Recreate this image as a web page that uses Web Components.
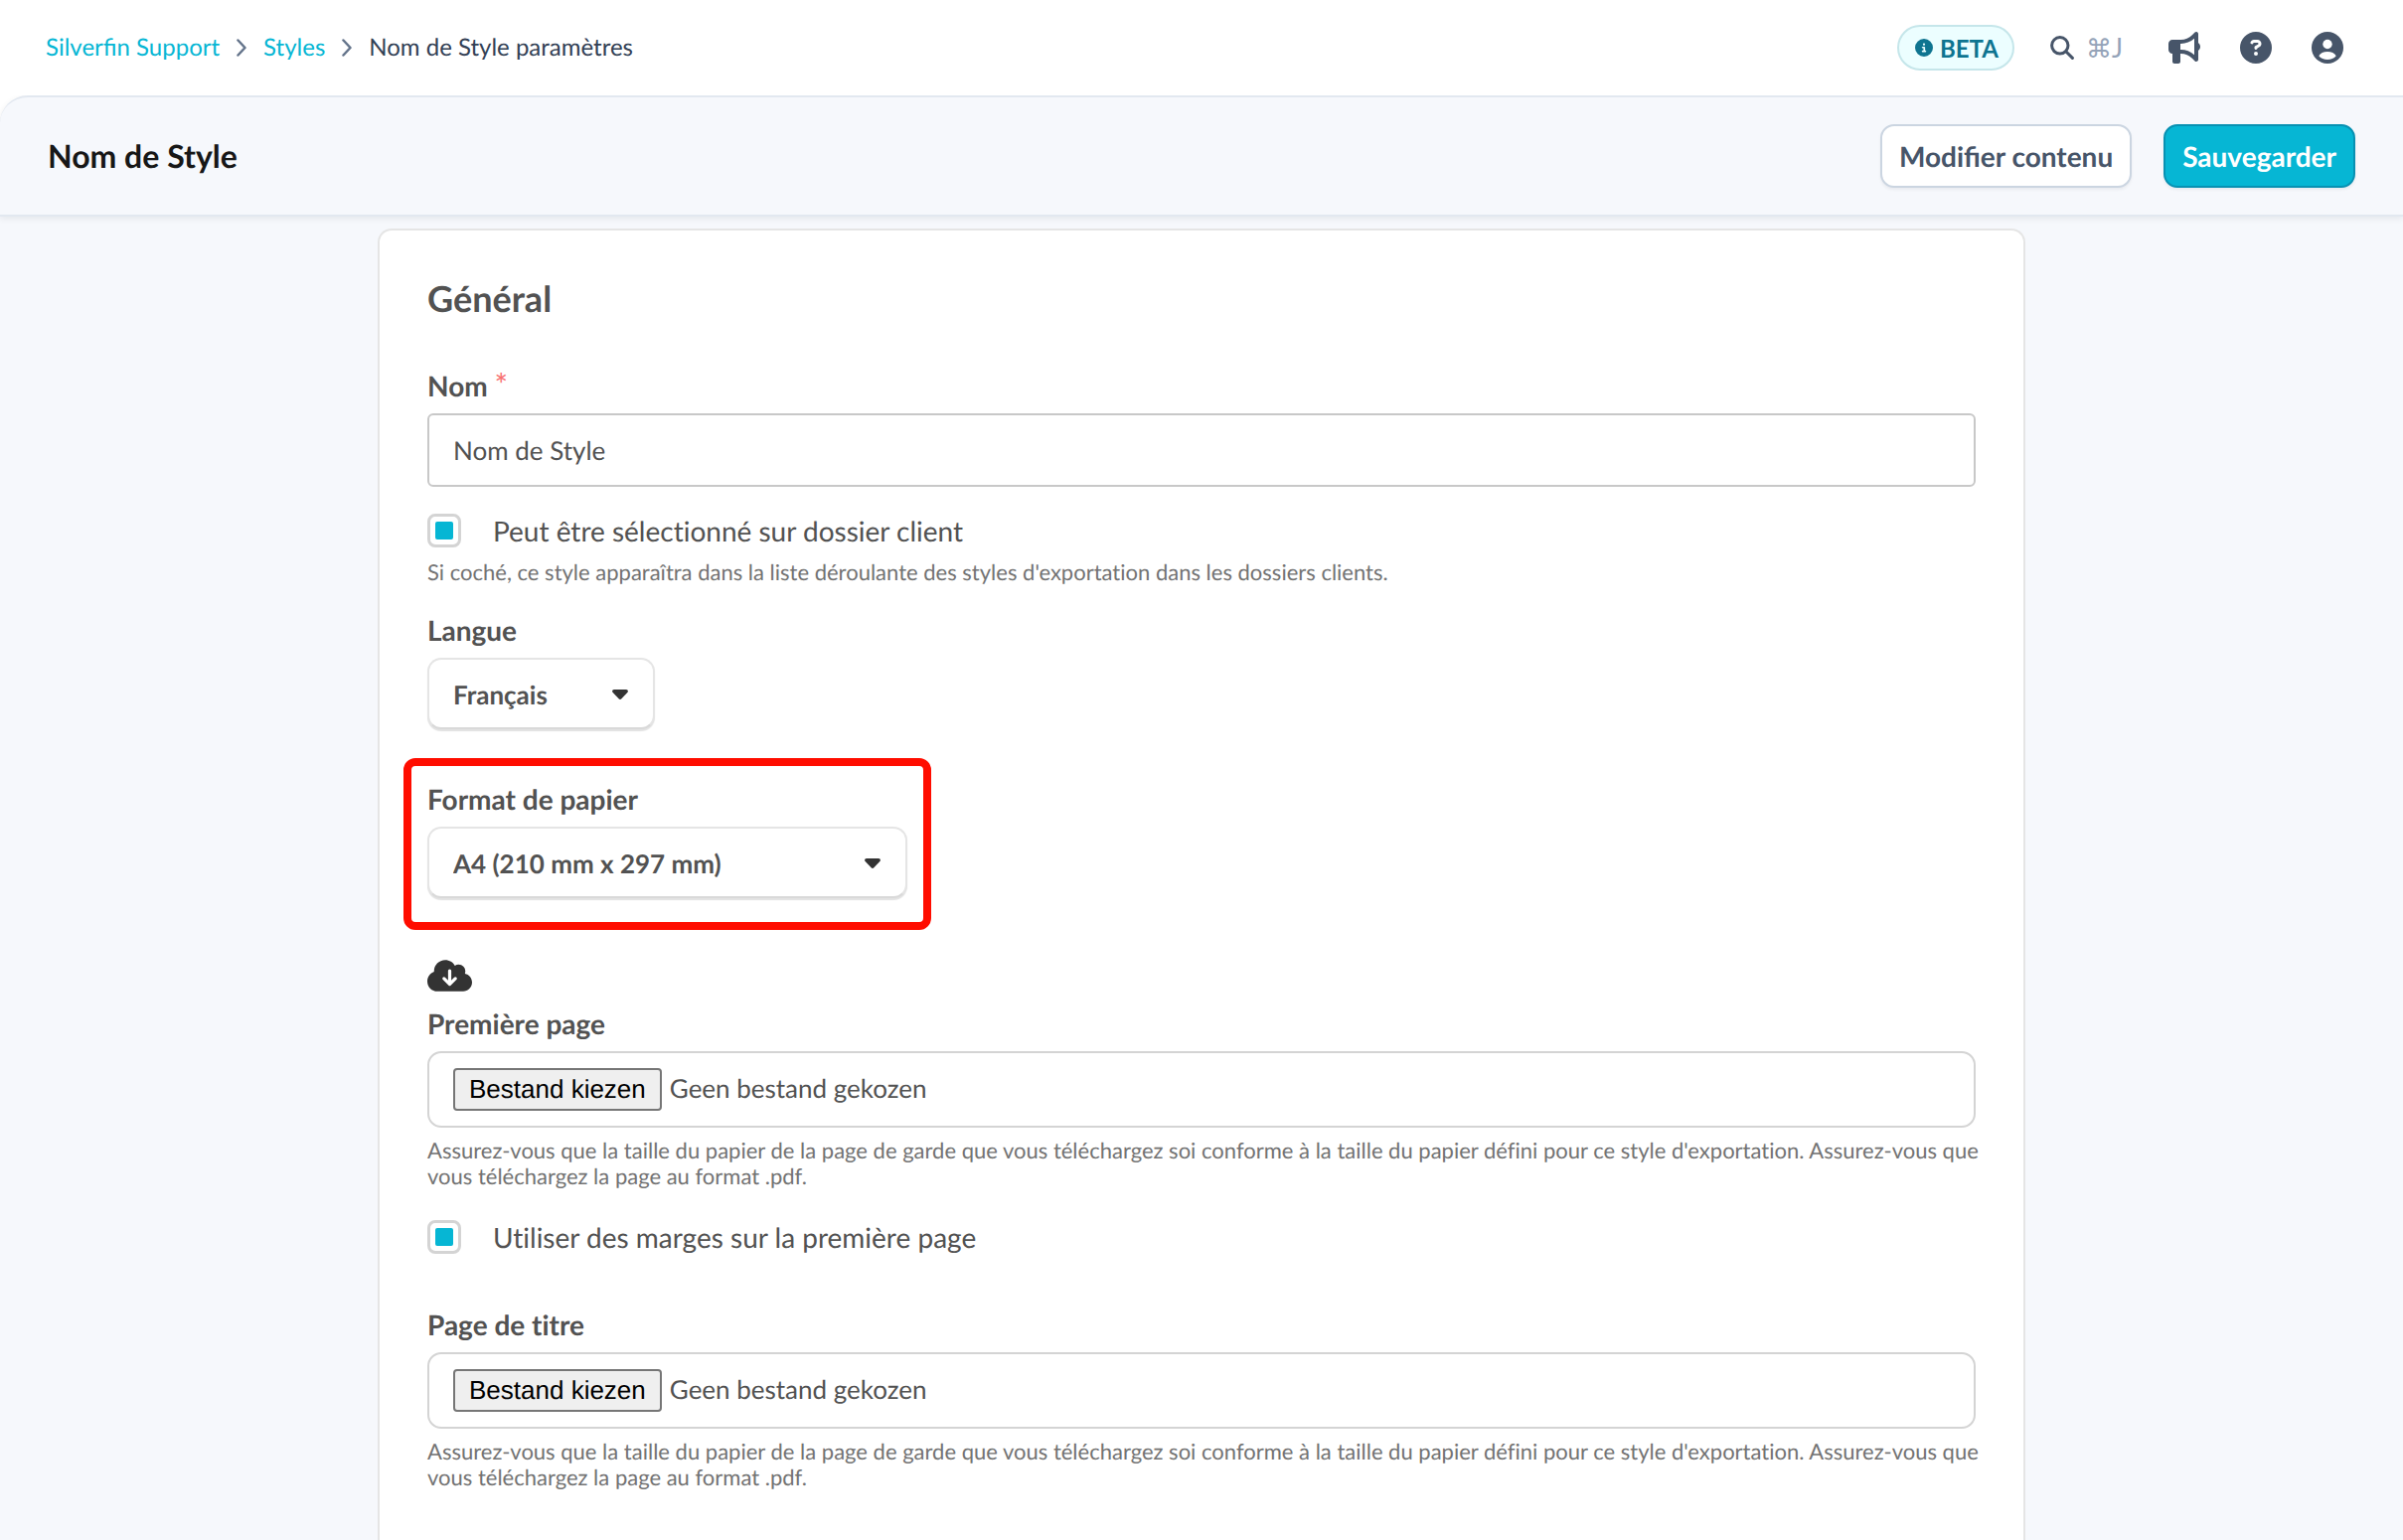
<!DOCTYPE html>
<html lang="fr">
<head>
<meta charset="utf-8">
<meta name="viewport" content="width=device-width, initial-scale=1">
<title>Nom de Style paramètres</title>
<style>
  html, body {
    margin: 0;
    min-height: 100%;
  }
  body {
    --ink: #171717;
    --text: #525252;
    --muted: #737373;
    --slate: #475569;
    --accent: #06b6d4;
    --line: #e2e8f0;
    --control-line: #d4d4d4;
    --page: #f6f8fc;
    --gap: 27px;
    display: flex;
    flex-direction: column;
    min-height: 100vh;
    background: white;
    color: var(--text);
    font-family: Lato, "Liberation Sans", sans-serif;
    font-size: 26px;
    text-rendering: geometricPrecision;
  }
  main {
    flex: 1;
    display: flex;
    flex-direction: column;
    background: var(--page);
    padding: 12px 48px 0;
  }
</style>
</head>
<body>

<top-bar>
  <bread-crumbs>
    <a href="#support">Silverfin Support</a>
    <a href="#styles">Styles</a>
    <span>Nom de Style paramètres</span>
  </bread-crumbs>
</top-bar>

<title-bar>
  Nom de Style
  <action-button slot="actions">Modifier contenu</action-button>
  <action-button slot="actions" primary>Sauvegarder</action-button>
</title-bar>

<main>
  <settings-card>
    <span slot="heading">Général</span>
    <text-field label="Nom" value="Nom de Style" required></text-field>
    <check-field label="Peut être sélectionné sur dossier client">Si coché, ce style apparaîtra dans la liste déroulante des styles d'exportation dans les dossiers clients.</check-field>
    <select-field label="Langue" options="Français|Nederlands|English"></select-field>
    <high-light>
      <select-field wide label="Format de papier" options="A4 (210 mm x 297 mm)|A3 (297 mm x 420 mm)"></select-field>
    </high-light>
    <file-field download label="Première page">Assurez-vous que la taille du papier de la page de garde que vous téléchargez soi conforme à la taille du papier défini pour ce style d'exportation. Assurez-vous que vous téléchargez la page au format .pdf.</file-field>
    <check-field spaced label="Utiliser des marges sur la première page"></check-field>
    <file-field label="Page de titre">Assurez-vous que la taille du papier de la page de garde que vous téléchargez soi conforme à la taille du papier défini pour ce style d'exportation. Assurez-vous que vous téléchargez la page au format .pdf.</file-field>
  </settings-card>
</main>

<script>
const icons = {
  info: ['0 0 512 512', '<path fill-rule="evenodd" d="M256 512A256 256 0 1 0 256 0a256 256 0 1 0 0 512zM216 336h24V272H216c-13.3 0-24-10.7-24-24s10.7-24 24-24h48c13.3 0 24 10.7 24 24v88h8c13.3 0 24 10.7 24 24s-10.7 24-24 24H216c-13.3 0-24-10.7-24-24s10.7-24 24-24zm40-208a32 32 0 1 1 0 64 32 32 0 1 1 0-64z"/>'],
  search: ['0 0 24 24', '<g fill="none" stroke="currentColor" stroke-width="3" stroke-linecap="round"><circle cx="9.8" cy="9.8" r="8.2"/><path d="M15.8 15.8L22.4 22.4"/></g>'],
  horn: ['0 0 512 512', '<path fill-rule="evenodd" d="M480 32c0-12.900-7.800-24.600-19.800-29.600s-25.700-2.200-34.900 6.900L381.700 53c-48 48-113.100 75-181 75H192 160 64c-35.300 0-64 28.700-64 64v96c0 35.300 28.700 64 64 64l0 128c0 17.700 14.300 32 32 32h64c17.700 0 32-14.300 32-32V352l8.700 0c67.900 0 133 27 181 75l43.600 43.600c9.200 9.200 22.900 11.900 34.900 6.900s19.800-16.600 19.800-29.600V300.400c18.600-8.800 32-32.500 32-60.400s-13.400-51.600-32-60.400V32zm-64 76.700V240 371.300C357.200 317.800 280.500 288 200.700 288H192V192h8.700c79.800 0 156.500-29.800 215.300-83.300z"/>'],
  help: ['0 0 512 512', '<path fill-rule="evenodd" d="M256 512A256 256 0 1 0 256 0a256 256 0 1 0 0 512zM169.800 165.300c7.900-22.300 29.100-37.300 52.800-37.300h58.300c34.900 0 63.100 28.300 63.100 63.100c0 22.600-12.100 43.500-31.700 54.800L280 264.400c-.2 13-10.900 23.600-24 23.600c-13.300 0-24-10.700-24-24V250.500c0-8.600 4.600-16.500 12.100-20.800l44.300-25.400c4.700-2.700 7.600-7.700 7.600-13.100c0-8.400-6.800-15.100-15.100-15.100H222.600c-3.400 0-6.400 2.100-7.500 5.300l-.4 1.200c-4.400 12.500-18.200 19-30.600 14.600s-19-18.200-14.600-30.600l.4-1.200zM224 352a32 32 0 1 1 64 0 32 32 0 1 1 -64 0z"/>'],
  user: ['0 0 32 32', '<circle cx="16" cy="16" r="16"/><circle cx="16" cy="12.500" r="4.700" fill="white"/><path fill="white" d="M7.300 24.200C8.800 21.500 12 20 16 20s7.200 1.500 8.700 4.200C22.600 26.700 19.600 28 16 28s-6.600-1.300-8.700-3.800z"/>'],
  cloud: ['0 32 640 448', '<path d="M0 336c0 79.500 64.500 144 144 144H512c70.700 0 128-57.300 128-128c0-61.900-44-113.600-102.400-125.400c4.100-10.700 6.400-22.400 6.400-34.600c0-53-43-96-96-96c-19.700 0-38.100 6-53.300 16.200C367 64.200 315.300 32 256 32C167.600 32 96 103.600 96 192c0 2.700 .1 5.400 .2 8.100C40.200 219.800 0 273.200 0 336z"/><path fill="none" stroke="white" stroke-width="46" stroke-linecap="round" stroke-linejoin="round" d="M320 186V374M239 298L320 378L401 298"/>'],
  chevron: ['0 0 10 18', '<path fill="none" stroke="currentColor" stroke-width="2.500" stroke-linecap="round" stroke-linejoin="round" d="M1.500 1.500L8.500 9L1.500 16.500"/>'],
  caret: ['0 0 16 10', '<path d="M2 0H14C15.800 0 16.500 1.800 15.300 3.100L9.400 9.300C8.600 10.100 7.400 10.100 6.600 9.300L.7 3.100C-.5 1.800 .2 0 2 0z"/>'],
};

function icon(name, width, height = width) {
  const [box, shapes] = icons[name];
  return `<svg viewBox="${box}" width="${width}" height="${height}" fill="currentColor" aria-hidden="true">${shapes}</svg>`;
}

// rules shared by every form field
const fieldStyle = `
  :host { display: block; }
  .label {
    display: block;
    margin-bottom: 10px;
    font-size: 28px;
    line-height: 36px;
    font-weight: bold;
  }
  .hint {
    margin-right: -16px;
    font-size: 22px;
    line-height: 26px;
    color: var(--muted);
  }
`;

class BaseElement extends HTMLElement {
  connectedCallback() {
    if (this.shadowRoot) return;
    this.attachShadow({mode: 'open'});
    this.shadowRoot.innerHTML = this.render();
    this.ready();
  }

  get label() {
    return this.getAttribute('label');
  }

  ready() {}
}

class TopBar extends BaseElement {
  render() {
    return `<style>
      :host {
        display: flex;
        align-items: center;
        justify-content: space-between;
        height: 96px;
        padding: 0 60px 0 46px;
        color: var(--slate);
      }
      .tools { display: flex; align-items: center; gap: 40px; }
      button {
        display: flex;
        align-items: center;
        padding: 0;
        border: 0;
        background: none;
        color: inherit;
        font: inherit;
        cursor: pointer;
      }
      .beta {
        gap: 7px;
        box-sizing: border-box;
        height: 46px;
        padding: 0 14px 0 16px;
        border: 2px solid #c5e6ea;
        border-radius: 23px;
        background: #ecfeff;
        color: #0e7490;
        font-size: 24px;
        font-weight: bold;
      }
      .search { gap: 12px; margin: 0 6px 0 -4px; }
      kbd { font: 26px Lato, "DejaVu Sans", sans-serif; color: #94a3b8; }
    </style>
    <slot></slot>
    <div class="tools">
      <button class="beta">${icon('info', 18)}BETA</button>
      <button class="search" aria-label="Rechercher">${icon('search', 24)}<kbd>⌘J</kbd></button>
      <button aria-label="Annonces">${icon('horn', 32)}</button>
      <button aria-label="Aide">${icon('help', 32)}</button>
      <button aria-label="Compte">${icon('user', 32)}</button>
    </div>`;
  }
}

class BreadCrumbs extends BaseElement {
  render() {
    const items = [...this.children];
    items.forEach((item, i) => item.slot = 'crumb' + i);
    return `<style>
      :host { display: block; font-size: 24px; line-height: 28px; color: #334155; }
      nav { display: flex; align-items: center; gap: 17px; }
      svg { color: #64748b; }
      ::slotted(a) { color: var(--accent); text-decoration: none; }
    </style>
    <nav aria-label="Fil d'Ariane">${items.map((item, i) => `<slot name="crumb${i}"></slot>`).join(icon('chevron', 10, 18))}</nav>`;
  }
}

class TitleBar extends BaseElement {
  render() {
    return `<style>
      :host {
        display: flex;
        align-items: center;
        justify-content: space-between;
        height: 118px;
        padding: 0 48px;
        border: solid var(--line);
        border-width: 2px 0;
        border-top-left-radius: 28px;
        background: var(--page);
        box-shadow: 0 2px 6px rgb(15 23 42 / 8%);
        clip-path: inset(0 0 -10px 0);
        z-index: 1;
      }
      h1 { margin: 0; font-size: 32px; line-height: 38px; color: var(--ink); }
      .actions { display: flex; gap: 32px; }
    </style>
    <h1><slot></slot></h1>
    <div class="actions"><slot name="actions"></slot></div>`;
  }
}

class ActionButton extends BaseElement {
  render() {
    return `<style>
      :host { display: block; }
      button {
        box-sizing: border-box;
        height: 64px;
        padding: 0 17px;
        border: 2px solid #cbd5e1;
        border-radius: 14px;
        background: white;
        box-shadow: 0 2px 3px rgb(15 23 42 / 6%);
        color: var(--slate);
        font: bold 28px Lato, sans-serif;
        text-rendering: inherit;
        cursor: pointer;
      }
      :host([primary]) button {
        border-color: #0891b2;
        background: var(--accent);
        color: white;
      }
    </style>
    <button><slot></slot></button>`;
  }
}

class SettingsCard extends BaseElement {
  render() {
    return `<style>
      :host {
        flex: 1;
        box-sizing: border-box;
        width: 100%;
        max-width: 1658px;
        margin: 0 auto;
        padding: 48px 48px 40px;
        border: 2px solid #e5e5e5;
        border-bottom: 0;
        border-radius: 14px 14px 0 0;
        background: white;
        font-variant-ligatures: no-common-ligatures;
      }
      h2 { margin: 0 0 50px; font-size: 36px; line-height: 40px; }
      .fields { display: flex; flex-direction: column; gap: var(--gap); }
    </style>
    <h2><slot name="heading"></slot></h2>
    <div class="fields"><slot></slot></div>`;
  }
}

class TextField extends BaseElement {
  render() {
    const required = this.hasAttribute('required');
    return `<style>${fieldStyle}
      .star {
        color: #f87171;
        font-size: 32px;
        font-weight: normal;
        line-height: 28px;
      }
      input {
        display: block;
        box-sizing: border-box;
        width: 100%;
        height: 74px;
        padding: 0 24px;
        border: 2px solid #c8c8c8;
        border-radius: 6px;
        background: white;
        color: var(--text);
        font: 26px Lato, sans-serif;
        text-rendering: inherit;
      }
    </style>
    <label class="label" for="field">${this.label}${required ? ' <span class="star">*</span>' : ''}</label>
    <input id="field" type="text" value="${this.getAttribute('value')}" ${required ? 'required' : ''}>`;
  }
}

class CheckField extends BaseElement {
  render() {
    const hint = this.textContent.trim() ? '<div class="hint"><slot></slot></div>' : '';
    return `<style>${fieldStyle}
      :host([spaced]) { margin: 4px 0 26px; }
      .row { display: flex; align-items: center; gap: 32px; }
      input {
        appearance: none;
        box-sizing: border-box;
        width: 34px;
        height: 34px;
        margin: 0;
        padding: 5px;
        border: 3px solid var(--control-line);
        border-radius: 8px;
        background: white;
      }
      input:checked::before {
        content: '';
        display: block;
        height: 18px;
        border-radius: 2px;
        background: var(--accent);
      }
      label { font-size: 28px; line-height: 34px; }
      .hint { margin-top: 12px; }
    </style>
    <div class="row">
      <input id="field" type="checkbox" checked>
      <label for="field">${this.label}</label>
    </div>
    ${hint}`;
  }
}

class SelectField extends BaseElement {
  render() {
    const options = this.getAttribute('options').split('|');
    return `<style>${fieldStyle}
      :host { width: 229px; }
      :host([wide]) { width: 483px; }
      .box { display: grid; align-items: center; }
      .box > * { grid-area: 1 / 1; }
      select {
        appearance: none;
        box-sizing: border-box;
        width: 100%;
        height: 72px;
        margin-bottom: 2px;
        padding: 2px 56px 0 24px;
        border: 2px solid #e5e5e5;
        border-bottom-color: #d9d9d9;
        border-radius: 14px;
        background: white;
        box-shadow: 0 2px 1px #e2e2e2;
        color: var(--text);
        font: bold 26px Lato, sans-serif;
        text-rendering: inherit;
      }
      svg {
        justify-self: end;
        margin-right: 27px;
        color: #333;
        pointer-events: none;
      }
    </style>
    <label class="label" for="field">${this.label}</label>
    <div class="box">
      <select id="field">${options.map(o => `<option>${o}</option>`).join('')}</select>
      ${icon('caret', 16, 10)}
    </div>`;
  }
}

class HighLight extends BaseElement {
  render() {
    return `<style>
      :host {
        align-self: flex-start;
        margin-left: -24px;
        padding: 15px 16px 22px;
        border: 8px solid #ff0d00;
        border-radius: 12px;
      }
    </style>
    <slot></slot>`;
  }
}

class FileField extends BaseElement {
  render() {
    const download = this.hasAttribute('download')
      ? `<a href="#download" aria-label="Télécharger">${icon('cloud', 45, 32)}</a>` : '';
    return `<style>${fieldStyle}
      a {
        display: flex;
        align-items: center;
        width: 45px;
        height: 38px;
        margin-bottom: 11px;
        color: #333;
      }
      .box {
        display: flex;
        align-items: baseline;
        gap: 8px;
        margin-bottom: 10px;
        padding: 15px 24px;
        border: 2px solid var(--control-line);
        border-radius: 14px;
      }
      button {
        height: 43px;
        padding: 0 14px;
        border: 2px solid #767676;
        border-radius: 4px;
        background: #efefef;
        color: black;
        font: 26px "Liberation Sans", Arial, sans-serif;
        text-rendering: inherit;
      }
      .chosen { line-height: 32px; }
    </style>
    ${download}
    <label class="label" for="field">${this.label}</label>
    <div class="box">
      <input id="field" type="file" accept=".pdf" hidden>
      <button type="button">Bestand kiezen</button>
      <span class="chosen">Geen bestand gekozen</span>
    </div>
    <div class="hint"><slot></slot></div>`;
  }

  ready() {
    const input = this.shadowRoot.querySelector('input');
    const chosen = this.shadowRoot.querySelector('.chosen');
    this.shadowRoot.querySelector('button').addEventListener('click', () => input.click());
    input.addEventListener('change', () => {
      chosen.textContent = input.files.length ? input.files[0].name : 'Geen bestand gekozen';
    });
  }
}

customElements.define('top-bar', TopBar);
customElements.define('bread-crumbs', BreadCrumbs);
customElements.define('title-bar', TitleBar);
customElements.define('action-button', ActionButton);
customElements.define('settings-card', SettingsCard);
customElements.define('text-field', TextField);
customElements.define('check-field', CheckField);
customElements.define('select-field', SelectField);
customElements.define('high-light', HighLight);
customElements.define('file-field', FileField);
</script>
</body>
</html>
